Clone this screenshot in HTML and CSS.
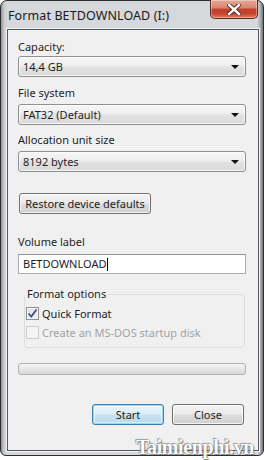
FILE: index.html
```html
<!DOCTYPE html>
<html>
<head>
<meta charset="utf-8">
<link rel="stylesheet" href="styles.css">
</head>
<body>
<div class="window">
  <div class="titlebar">
    <span class="title">Format BETDOWNLOAD (I:)</span>
    <div class="close">
      <svg width="14" height="11" viewBox="0 0 14 11"><path d="M2 1 L12 10 M12 1 L2 10" stroke="#4a1f18" stroke-width="4.2" stroke-linecap="square"/><path d="M2 1 L12 10 M12 1 L2 10" stroke="#ffffff" stroke-width="2.4" stroke-linecap="square"/></svg>
    </div>
  </div>
  <div class="client">
    <div class="lbl l1">Capacity:</div>
    <div class="combo">14,4 GB<span class="arrow"></span></div>
    <div class="lbl l2">File system</div>
    <div class="combo">FAT32 (Default)<span class="arrow"></span></div>
    <div class="lbl l2 l3">Allocation unit size</div>
    <div class="combo">8192 bytes<span class="arrow"></span></div>
    <div class="btn restore">Restore device defaults</div>
    <div class="lbl vol">Volume label</div>
    <div class="input">BETDOWNLOAD<span class="caret"></span></div>
    <fieldset class="group">
      <legend>Format options</legend>
      <div class="chk">
        <span class="box"><svg width="11" height="11" viewBox="0 0 11 11"><path d="M1.5 5.5 L4.3 8.5 L9.5 1.5" fill="none" stroke="#3d4f87" stroke-width="1.8"/></svg></span>
        <span>Quick Format</span>
      </div>
      <div class="chk disabled">
        <span class="box"></span>
        <span>Create an MS-DOS startup disk</span>
      </div>
    </fieldset>
    <div class="progress"></div>
    <div class="actions">
      <div class="btn default">Start</div>
      <div class="btn">Close</div>
    </div>
  </div>
</div>
<div class="watermark">Taimienphi.vn</div>
</body>
</html>
```
FILE: styles.css
```css
html, body {
  margin: 0;
  padding: 0;
  background: #ffffff;
}
body {
  width: 265px;
  height: 460px;
  position: relative;
  overflow: hidden;
  font-family: "Noto Sans", "Open Sans", sans-serif;
  font-size: 11px;
  color: #1e1e1e;
}
.window {
  box-sizing: border-box;
  width: 264px;
  height: 456px;
  border: 1px solid #2c2c2c;
  border-radius: 7px 7px 6px 6px;
  background: linear-gradient(90deg, #8e9196 0px, #c8cbcf 3px, #d6d8db 6px, #d6d8db 256px, #b0b3b7 259px, #74777c 262px);
  display: flex;
  flex-direction: column;
  padding: 0 4px 4px 6px;
}
.titlebar {
  height: 28px;
  display: flex;
  align-items: flex-start;
  position: relative;
}
.title {
  font-size: 12.5px;
  color: #1a1a1a;
  margin-top: 6px;
  margin-left: 1px;
  letter-spacing: 0.1px;
}
.close {
  position: absolute;
  right: 1px;
  top: -1px;
  width: 48px;
  height: 19px;
  box-sizing: border-box;
  border: 1px solid #5b2a22;
  border-top: none;
  border-radius: 0 0 5px 5px;
  background: linear-gradient(180deg, #e8a899 0%, #d98471 45%, #c3402b 50%, #c4442e 75%, #e07a5c 100%);
  display: flex;
  align-items: center;
  justify-content: center;
  box-shadow: inset 0 0 0 1px rgba(255,255,255,0.35);
}
.client {
  flex: 1;
  border: 1px solid #54585e;
  box-shadow: 0 0 0 1px #f4f5f6;
  background: #f0f0f0;
  display: flex;
  flex-direction: column;
  padding: 0 9px 0 10px;
}
.lbl {
  line-height: 16px;
  height: 16px;
}
.l1 { margin-top: 9px; }
.l2 { margin-top: 8px; }
.l3 { margin-top: 7px; }
.combo {
  box-sizing: border-box;
  height: 21px;
  margin-top: 1px;
  width: 228px;
  border: 1px solid #8e8f8f;
  border-radius: 3px;
  background: linear-gradient(180deg, #f6f6f6 0%, #ededed 48%, #e2e2e2 52%, #dadada 100%);
  padding-left: 4px;
  line-height: 19px;
  position: relative;
  box-shadow: inset 0 0 0 1px rgba(255,255,255,0.7);
}
.l2 + .combo, .l3 + .combo { margin-top: 3px; }
.arrow {
  position: absolute;
  right: 6px;
  top: 8px;
  width: 0;
  height: 0;
  border-left: 4px solid transparent;
  border-right: 4px solid transparent;
  border-top: 4px solid #111;
}
.btn {
  box-sizing: border-box;
  height: 21px;
  border: 1px solid #707070;
  border-radius: 3px;
  background: linear-gradient(180deg, #f2f2f2 0%, #ebebeb 48%, #dddddd 52%, #cfcfcf 100%);
  box-shadow: inset 0 0 0 1px rgba(255,255,255,0.75);
  text-align: center;
  line-height: 19px;
  font-size: 11px;
}
.restore {
  margin-top: 21px;
  margin-left: 1px;
  width: 132px;
}
.vol { margin-top: 20px; }
.input {
  box-sizing: border-box;
  margin-top: 4px;
  height: 20px;
  width: 228px;
  border: 1px solid #abadb3;
  border-top-color: #8e9199;
  background: #ffffff;
  padding-left: 4px;
  line-height: 18px;
  display: flex;
  align-items: center;
}
.caret {
  display: inline-block;
  width: 1px;
  height: 13px;
  background: #000;
  margin-left: 1px;
}
.group {
  margin: 12px 0 0 6px;
  width: 221px;
  box-sizing: border-box;
  height: 62px;
  border: 1px solid #d5dfe5;
  border-radius: 3px;
  padding: 2px 0 0 1px;
}
.group legend {
  padding: 0 2px;
  margin-left: -1px;
  line-height: 16px;
}
.chk {
  display: flex;
  align-items: center;
  height: 19px;
  gap: 3px;
}
.box {
  box-sizing: border-box;
  width: 13px;
  height: 13px;
  border: 1px solid #8f8f8f;
  background: linear-gradient(135deg, #dcdcdc 0%, #f6f6f6 100%);
  display: flex;
  align-items: center;
  justify-content: center;
  box-shadow: inset 0 0 0 1px #f4f4f4;
}
.chk.disabled { color: #a3a3a3; }
.chk.disabled .box {
  border-color: #cdcdcd;
  background: #f4f4f4;
}
.progress {
  box-sizing: border-box;
  margin-top: 15px;
  height: 12px;
  width: 228px;
  border: 1px solid #b2b2b2;
  border-radius: 3px;
  background: linear-gradient(180deg, #f4f4f4 0%, #e6e6e6 50%, #d6d6d6 100%);
}
.actions {
  display: flex;
  justify-content: flex-end;
  gap: 8px;
  margin-top: 29px;
  width: 228px;
  padding-right: 2px;
  box-sizing: border-box;
}
.actions .btn {
  width: 72px;
  height: 21px;
}
.btn.default {
  border-color: #3c7fb1;
  box-shadow: inset 0 0 0 1px #9fd3ee, inset 0 0 0 2px rgba(255,255,255,0.5);
  background: linear-gradient(180deg, #eaf5fb 0%, #dcedf7 48%, #c7e2f2 52%, #b8d9ee 100%);
}
.watermark {
  position: absolute;
  left: 136px;
  top: 436px;
  line-height: 22px;
  font-family: "Liberation Serif", serif;
  font-weight: bold;
  font-size: 20px;
  color: #ffffff;
  letter-spacing: -0.4px;
  text-shadow: 0 0 1px #555, 1px 1px 1px #777, -1px -1px 1px #999;
  opacity: 0.9;
  white-space: nowrap;
}
```
